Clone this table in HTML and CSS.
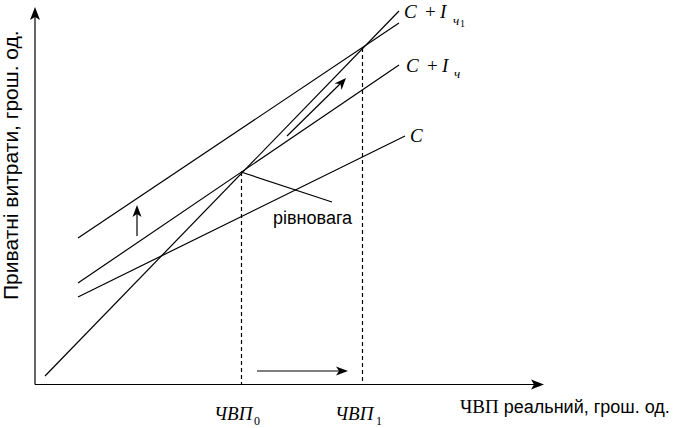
FILE: index.html
```html
<!DOCTYPE html>
<html lang="uk">
<head>
<meta charset="utf-8">
<title>Рівновага</title>
<link rel="stylesheet" href="styles.css">
</head>
<body>
<main class="chart">
<svg class="canvas" viewBox="0 0 673 428" width="673" height="428" xmlns="http://www.w3.org/2000/svg">
  <!-- axes -->
  <line class="ln" x1="35" y1="384.5" x2="35" y2="14"/>
  <polygon class="head" points="35,7 40,20 35,17 30,20"/>
  <line class="ln" x1="35" y1="384.5" x2="536" y2="384.5"/>
  <polygon class="head" points="544,384.5 531,379.5 534,384.5 531,389.5"/>

  <!-- curves -->
  <line class="ln" x1="45" y1="376" x2="399" y2="11"/>
  <line class="ln" x1="78" y1="238" x2="399" y2="23"/>
  <line class="ln" x1="78" y1="283" x2="399" y2="65"/>
  <line class="ln" x1="78" y1="297" x2="405" y2="136"/>

  <!-- dashed verticals -->
  <line class="dash" x1="241.5" y1="172" x2="241.5" y2="384"/>
  <line class="dash" x1="362.5" y1="48" x2="362.5" y2="384"/>

  <!-- pointer to equilibrium -->
  <line class="ln" x1="241" y1="172" x2="332" y2="202"/>

  <!-- arrows -->
  <line class="ln" x1="137" y1="236" x2="137" y2="212"/>
  <polygon class="head" points="137,205 141.5,217 137,214 132.5,217"/>

  <line class="ln" x1="287" y1="136" x2="341" y2="83"/>
  <polygon class="head" points="346,78 341.5,90 340.5,84 334.5,83.5"/>

  <line class="ln" x1="257" y1="371" x2="340" y2="371"/>
  <polygon class="head" points="348,371 336,366.5 339,371 336,375.5"/>

  <!-- labels -->
  <text class="lbl" x="273" y="224">рівновага</text>

  <text class="math" x="404" y="17.5">C</text>
  <text class="op" x="425" y="17.5">+</text>
  <text class="math" x="440" y="17.5">I</text>
  <text class="sub" x="453" y="24.5">ч</text>
  <text class="subn" x="460" y="26.5">1</text>

  <text class="math" x="406" y="72">C</text>
  <text class="op" x="427" y="72">+</text>
  <text class="math" x="442" y="72">I</text>
  <text class="sub" x="454" y="78">ч</text>

  <text class="math" x="410" y="142">C</text>

  <text class="math" x="214" y="420">ЧВП</text>
  <text class="subn0" x="254" y="425">0</text>
  <text class="math" x="335" y="420">ЧВП</text>
  <text class="subn0" x="376" y="425">1</text>

  <text class="x-title" x="460" y="413"><tspan class="serif">ЧВП</tspan> реальний, грош. од.</text>

  <text class="y-title" transform="translate(18 300) rotate(-90)">Приватні витрати, грош. од.</text>
</svg>
</main>
</body>
</html>
```

FILE: styles.css
```css
html, body {
  margin: 0;
  padding: 0;
  background: #ffffff;
}

.chart {
  width: 673px;
  height: 428px;
  overflow: hidden;
}

.canvas {
  display: block;
}

.ln {
  stroke: #000;
  stroke-width: 1.2;
  fill: none;
}

.dash {
  stroke: #000;
  stroke-width: 1.2;
  stroke-dasharray: 4 3;
  fill: none;
}

.head {
  fill: #000;
  stroke: none;
}

.lbl,
.x-title,
.y-title {
  font-family: "Liberation Sans", Arial, sans-serif;
  font-size: 18px;
  fill: #000;
}

.y-title {
  font-size: 21px;
}

.x-title .serif {
  font-family: "Liberation Serif", "Times New Roman", serif;
  font-size: 19px;
}

.math {
  font-family: "Liberation Serif", "Times New Roman", serif;
  font-style: italic;
  font-size: 19px;
  fill: #000;
}

.op {
  font-family: "Liberation Serif", "Times New Roman", serif;
  font-size: 19px;
  fill: #000;
}

.sub {
  font-family: "Liberation Serif", "Times New Roman", serif;
  font-style: italic;
  font-size: 13px;
  fill: #000;
}

.subn {
  font-family: "Liberation Serif", "Times New Roman", serif;
  font-size: 10px;
  fill: #000;
}

.subn0 {
  font-family: "Liberation Serif", "Times New Roman", serif;
  font-size: 12px;
  fill: #000;
}
```
